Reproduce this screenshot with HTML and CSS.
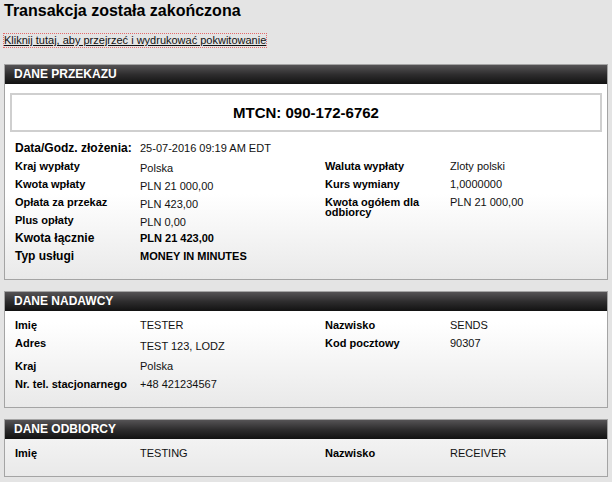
FILE: index.html
```html
<!DOCTYPE html>
<html lang="pl">
<head>
    <meta charset="UTF-8">
    <meta name="viewport" content="width=device-width, initial-scale=1.0">
    <title>Transakcja została zakończona</title>
    <link rel="stylesheet" href="styles.css">
</head>
<body>
    <div class="page">
        <h1 class="page-title">Transakcja została zakończona</h1>
        <p class="print-link">
            <a href="#">Kliknij tutaj, aby przejrzeć i wydrukować pokwitowanie</a>
        </p>

        <!-- Transfer -->
        <section class="panel panel-transfer">
            <h2 class="panel-header">DANE PRZEKAZU</h2>
            <div class="panel-body">
                <div class="mtcn">MTCN: 090-172-6762</div>
                <div class="details">
                    <div class="row row-date">
                        <span class="label">Data/Godz. złożenia:</span>
                        <span class="value">25-07-2016 09:19 AM EDT</span>
                    </div>
                    <div class="columns">
                        <div class="col col-left">
                            <div class="row">
                                <span class="label">Kraj wypłaty</span>
                                <span class="value value-low">Polska</span>
                            </div>
                            <div class="row">
                                <span class="label">Kwota wpłaty</span>
                                <span class="value value-low">PLN 21 000,00</span>
                            </div>
                            <div class="row">
                                <span class="label">Opłata za przekaz</span>
                                <span class="value value-low">PLN 423,00</span>
                            </div>
                            <div class="row">
                                <span class="label">Plus opłaty</span>
                                <span class="value value-low">PLN 0,00</span>
                            </div>
                            <div class="row row-strong">
                                <span class="label">Kwota łącznie</span>
                                <span class="value">PLN 21 423,00</span>
                            </div>
                            <div class="row row-strong">
                                <span class="label">Typ usługi</span>
                                <span class="value">MONEY IN MINUTES</span>
                            </div>
                        </div>
                        <div class="col">
                            <div class="row">
                                <span class="label">Waluta wypłaty</span>
                                <span class="value">Zloty polski</span>
                            </div>
                            <div class="row">
                                <span class="label">Kurs wymiany</span>
                                <span class="value">1,0000000</span>
                            </div>
                            <div class="row">
                                <span class="label label-wrap">Kwota ogółem dla odbiorcy</span>
                                <span class="value">PLN 21 000,00</span>
                            </div>
                        </div>
                    </div>
                </div>
            </div>
        </section>

        <!-- Sender -->
        <section class="panel">
            <h2 class="panel-header">DANE NADAWCY</h2>
            <div class="panel-body panel-body-plain">
                <div class="columns">
                    <div class="col col-left">
                        <div class="row">
                            <span class="label">Imię</span>
                            <span class="value">TESTER</span>
                        </div>
                        <div class="row">
                            <span class="label">Adres</span>
                            <span class="value value-address">TEST 123, LODZ</span>
                        </div>
                        <div class="row">
                            <span class="label">Kraj</span>
                            <span class="value">Polska</span>
                        </div>
                        <div class="row">
                            <span class="label">Nr. tel. stacjonarnego</span>
                            <span class="value">+48 421234567</span>
                        </div>
                    </div>
                    <div class="col">
                        <div class="row">
                            <span class="label">Nazwisko</span>
                            <span class="value">SENDS</span>
                        </div>
                        <div class="row">
                            <span class="label">Kod pocztowy</span>
                            <span class="value">90307</span>
                        </div>
                    </div>
                </div>
            </div>
        </section>

        <!-- Receiver -->
        <section class="panel">
            <h2 class="panel-header">DANE ODBIORCY</h2>
            <div class="panel-body panel-body-plain">
                <div class="columns">
                    <div class="col col-left">
                        <div class="row">
                            <span class="label">Imię</span>
                            <span class="value">TESTING</span>
                        </div>
                    </div>
                    <div class="col">
                        <div class="row">
                            <span class="label">Nazwisko</span>
                            <span class="value">RECEIVER</span>
                        </div>
                    </div>
                </div>
            </div>
        </section>
    </div>
</body>
</html>
```

FILE: styles.css
```css
* {
    margin: 0;
    padding: 0;
    box-sizing: border-box;
}

body {
    font-family: 'Liberation Sans', Arial, sans-serif;
    background: #e4e4e4;
    color: #000;
}

.page {
    padding: 0 4px;
}

.page-title {
    margin-top: 1px;
    font-size: 16px;
    line-height: 19px;
    font-weight: bold;
}

.print-link {
    margin-top: 14px;
    font-size: 11px;
    line-height: 13px;
}

.print-link a {
    display: inline-block;
    color: #111;
    text-decoration: underline;
    outline: 1px dotted #e46a6a;
    outline-offset: 0;
}

.panel {
    margin-top: 11px;
    border: 1px solid #a4a4a4;
}

.panel-transfer {
    margin-top: 17px;
}

.panel-header {
    height: 19px;
    padding: 0 9px;
    background: linear-gradient(to bottom, #555355 0%, #2e2d2e 50%, #121212 100%);
    color: #fff;
    font-size: 12px;
    line-height: 18px;
    font-weight: bold;
}

.panel-body {
    padding: 9px 5px 16px;
    background: #fff linear-gradient(to bottom, #fff, #e9e9e9) no-repeat bottom / 100% 85px;
}

.panel-body-plain {
    padding: 7px 5px 16px 10px;
}

.mtcn {
    height: 39px;
    border: 2px solid #cfcfcf;
    background: #fff;
    text-align: center;
    font-size: 15px;
    line-height: 35px;
    font-weight: bold;
}

.details {
    padding-left: 5px;
}

.row-date {
    margin: 9px 0 4px;
}

.row-date .label {
    font-size: 12px;
}

.columns {
    display: flex;
}

.col {
    flex: 1;
    display: flex;
    flex-direction: column;
    gap: 4px;
}

.col-left {
    flex: 0 0 310px;
}

.row {
    display: flex;
    align-items: flex-start;
    font-size: 11px;
    line-height: 14px;
}

.label {
    flex: 0 0 125px;
    font-weight: bold;
}

.label-wrap {
    padding: 2px 10px 0 0;
    line-height: 10px;
}

.value {
    color: #111;
}

.value-low {
    padding-top: 2px;
    margin-bottom: -2px;
}

.value-address {
    padding: 3px 0 2px;
}

.row-strong .label {
    font-size: 12px;
}

.row-strong .value {
    font-weight: bold;
    color: #000;
}
```
